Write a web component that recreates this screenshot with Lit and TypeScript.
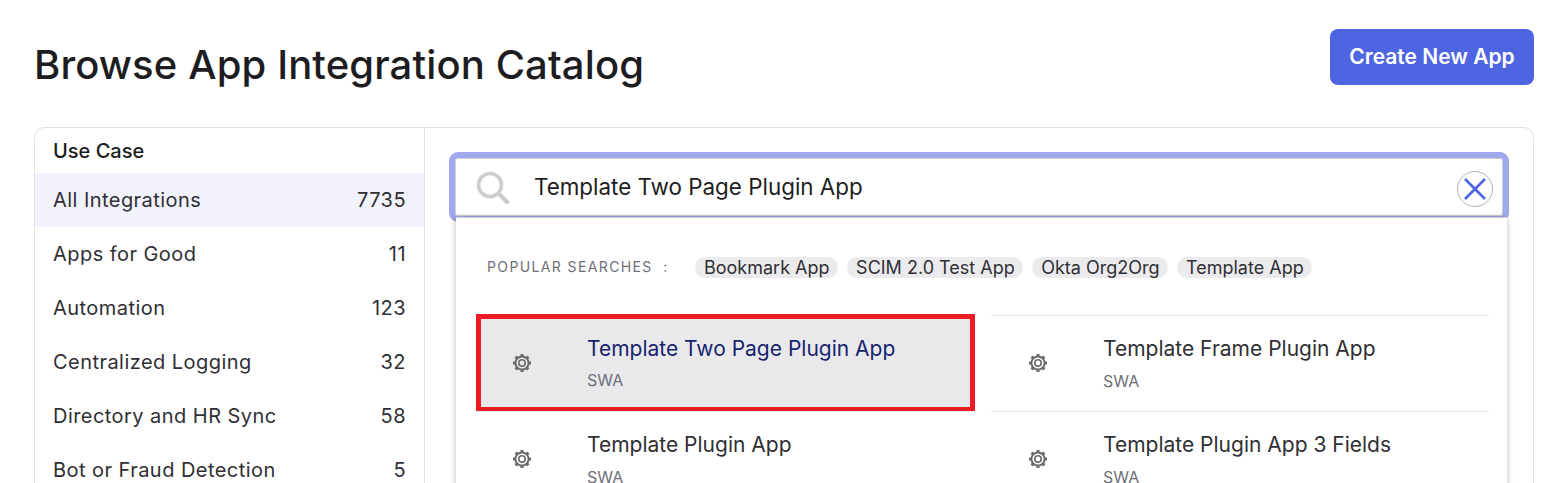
import { LitElement, html, css, svg } from "lit";
import { customElement } from "lit/decorators.js";

const cats: [string, number][] = [
  ["All Integrations", 7735],
  ["Apps for Good", 11],
  ["Automation", 123],
  ["Centralized Logging", 32],
  ["Directory and HR Sync", 58],
  ["Bot or Fraud Detection", 5],
];
const chips = ["Bookmark App", "SCIM 2.0 Test App", "Okta Org2Org", "Template App"];
const results = ["Template Two Page Plugin App", "Template Frame Plugin App", "Template Plugin App", "Template Plugin App 3 Fields"];

const teeth = Array.from({ length: 8 }, (_, i) => i * 45);
const gear = html`<svg class="gear" width="18" height="18" viewBox="0 0 18 18">
  ${teeth.map((a) => svg`<rect x="7.5" y="0" width="3" height="3" fill="#6a6a6a" transform="rotate(${a} 9 9)"></rect>`)}
  <circle cx="9" cy="9" r="6.6" fill="none" stroke="#6a6a6a" stroke-width="2"></circle>
  <circle cx="9" cy="9" r="3.2" fill="none" stroke="#6a6a6a" stroke-width="1.6"></circle>
</svg>`;

@customElement("app-root")
export class AppRoot extends LitElement {
  static styles = css`
    :host { display: block; height: 483px; overflow: hidden; background: #fff; color: #1d1d21; font-family: Inter, "Liberation Sans", sans-serif; }
    .page { padding: 29px 26px 0 34px; }
    .head { display: flex; justify-content: space-between; align-items: flex-start; height: 98px; }
    h1 { margin: 13px 0 0; font-size: 40px; line-height: 46px; font-weight: 500; letter-spacing: 0.12px; color: #1d1d21; }
    .create { width: 204px; height: 56px; border: 0; padding: 0 0 1px; border-radius: 8px; background: #4e65e2; color: #fff; font: 600 21px Inter, sans-serif; }
    .panel { display: flex; height: 400px; border: 1px solid #e1e1e1; border-radius: 10px 10px 0 0; border-bottom: 0; }
    .side { width: 389px; flex: none; border-right: 1px solid #e1e1e1; }
    .side h2 { margin: 0; height: 45px; padding: 12px 18px 0; box-sizing: border-box; font-size: 20px; line-height: 22px; font-weight: 500; }
    .cat { display: flex; justify-content: space-between; align-items: center; height: 54px; padding: 0 18px; font-size: 20px; letter-spacing: 0.45px; color: #2f2f34; }
    .cat.on { background: #f2f2fc; }
    .main { flex: 1; padding: 24px 24px 0; min-width: 0; }
    .search { height: 70px; box-sizing: border-box; border: 6px solid #a0a8ee; border-radius: 9px; background: #fff; display: flex; align-items: flex-start; box-shadow: inset 0 0 0 1px #d2d2d2; }
    .search .mag { margin: 13px 0 0 21px; flex: none; }
    .search .q { margin: 14px 0 0 24px; flex: 1; font-size: 22.4px; line-height: 30px; color: #1d1d21; }
    .search .x { margin: 13px 10px 0 0; flex: none; }
    .drop { margin: -5px 2px 0 7px; height: 300px; background: #fff; border-top: 1px solid #cfcfcf; box-sizing: border-box; border-radius: 0 0 4px 4px; box-shadow: 0 1px 6px rgba(0,0,0,.28); padding: 0 18px 0 19px; position: relative; }
    .pop { display: flex; align-items: center; height: 97px; box-sizing: border-box; padding: 1px 0 0 12px; }
    .pop .lbl { font-size: 14px; letter-spacing: 1.38px; color: #6e6e78; width: 208px; flex: none; margin-bottom: 2px; }
    .chip { background: #ebebed; border-radius: 12px; font-size: 18px; line-height: 21px; padding: 0 8.5px 0 9px; margin-right: 9px; color: #2f2f34; }
    .grid { display: grid; grid-template-columns: 500px 498px; column-gap: 16px; }
    .item { display: flex; height: 96px; border-top: 1px solid #e9e9e9; box-sizing: border-box; }
    .item.sel { background: #e9e9ec; border: 0; outline: 5px solid #ed1c24; outline-offset: -5px; margin: -1px 0 -1px 1px; height: 98px; }
    .gear { flex: none; margin: 38px 0 0 37.5px; }
    .item.sel .gear { margin: 40px 0 0 36.5px; }
    .txt { margin-left: 56.5px; padding-top: 20px; }
    .item.sel .txt { padding-top: 22px; }
    .t { font-size: 21px; line-height: 26px; color: #2f2f34; }
    .item.sel .t { color: #18246e; }
    .s { margin-top: 9px; font-size: 16px; line-height: 20px; color: #6e6e78; }
    .item.sel .s { margin-top: 8px; }
  `;

  render() {
    return html`<div class="page">
      <div class="head">
        <h1>Browse App Integration Catalog</h1>
        <button class="create">Create New App</button>
      </div>
      <div class="panel">
        <div class="side">
          <h2>Use Case</h2>
          ${cats.map((c, i) => html`<div class="cat ${i === 0 ? "on" : ""}"><span>${c[0]}</span><span>${c[1]}</span></div>`)}
        </div>
        <div class="main">
          <div class="search">
            <svg class="mag" width="34" height="34" viewBox="0 0 34 34" fill="none" stroke="#cdcdcd">
              <circle cx="14" cy="14" r="11.5" stroke-width="3.6"></circle>
              <path d="M22.5 22.5L31 31" stroke-width="4.4" stroke-linecap="round"></path>
            </svg>
            <span class="q">Template Two Page Plugin App</span>
            <svg class="x" width="36" height="36" viewBox="0 0 36 36" fill="#fff">
              <circle cx="18" cy="18" r="17.5" stroke="#b3b3b3" stroke-width="1"></circle>
              <path d="M8 8L28 28M28 8L8 28" stroke="#4e65e2" stroke-width="2.6" fill="none"></path>
            </svg>
          </div>
          <div class="drop">
            <div class="pop">
              <span class="lbl">POPULAR SEARCHES &nbsp;:</span>
              ${chips.map((c) => html`<span class="chip">${c}</span>`)}
            </div>
            <div class="grid">
              ${results.map((r, i) => html`<div class="item ${i === 0 ? "sel" : ""}">
                ${gear}
                <div class="txt"><div class="t">${r}</div><div class="s">SWA</div></div>
              </div>`)}
            </div>
          </div>
        </div>
      </div>
    </div>`;
  }
}
